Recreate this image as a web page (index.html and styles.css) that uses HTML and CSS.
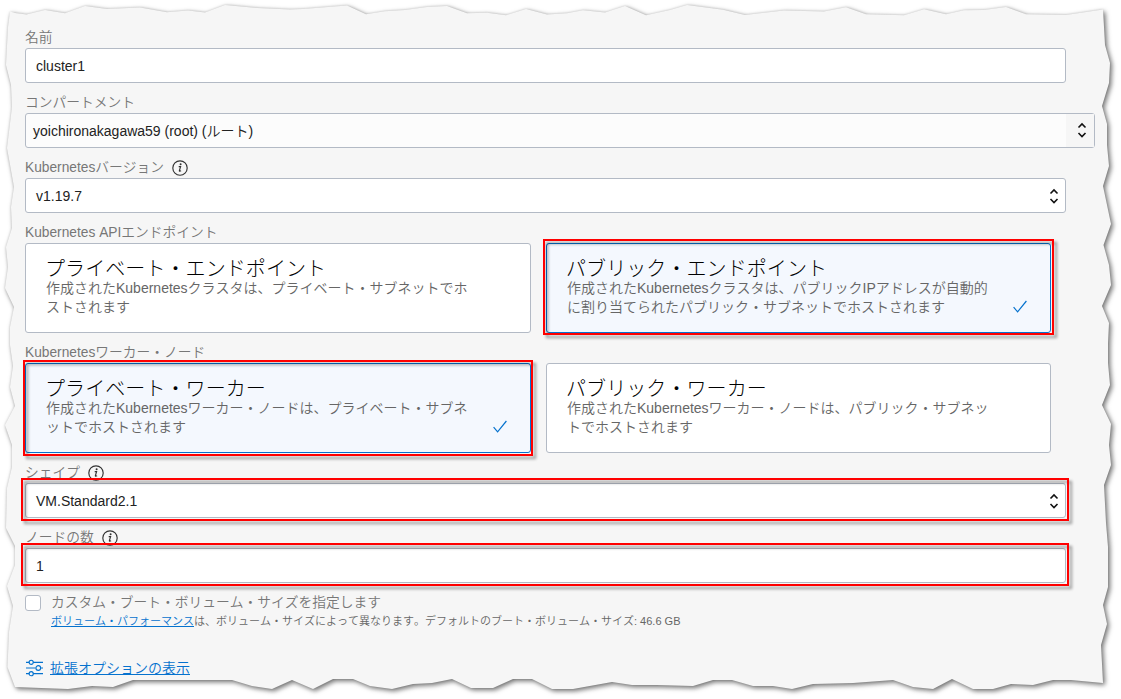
FILE: index.html
```html
<!DOCTYPE html>
<html lang="ja">
<head>
<meta charset="utf-8">
<title>クラスタの作成</title>
<link rel="stylesheet" href="styles.css">
</head>
<body>
<svg class="paper" width="1121" height="699" viewBox="0 0 1121 699" aria-hidden="true">
<path d="M10 11.5L15 13L26.500 14.500L45 10L65 13.300L85 6L107 9L140 7.500L167 12.300L188 10.500L205 12.500L225 5L257 8L290 9.500L303 9L347 5.500L366 14.300L385 11.300L405 10L427 7L447 6L467 13.300L487 12.700L506 15.300L526 9L547 14.500L567 13.300L583 10.300L605 12.500L625 6L646 15.300L670 10L687 5L723 9.700L745 15L784 10.500L824 11.500L846 7.300L866 14.300L904 15.300L924 9.300L946 14.300L964 10.300L984 10L1006 7L1026 14.300L1066 15L1103 9.500L1105 45L1110 63L1109 83L1102 106L1107 124L1107 145L1109 166L1103 186L1111 224L1103.500 245L1109 265L1111 285L1102 306L1109 323L1108 343L1108 363L1110 385L1102 405L1111 424L1109 445L1111 465L1104 485L1106 523L1108 547L1108 587L1103 605L1107 624L1101 645L1103 683L1071 680L1053 680L1033 685L1011 684L993 689L973 689L952 679L933 689L913 687L893 680L853 683L813 684L792 689L773 686L753 686L732 680L713 680L693 686L657 685L632 685L612 682L573 689L552 689L532 679L513 679L493 688L471 688L452 679L432 683L413 684L392 689L370 686L353 679L333 679L313 689L292 680L272 689L252 686L232 680L133 680L113 687L92 686L68 689L15 687L7.500 667L9 632L13 606L7 586L15 565L15 546L6 528L7 488L12 467L12 445L5 425L15 406L10 387L13 366L10 345L10 327L14 307L5 288L8 267L6 247L12 228L11 207L14 187L7 148L12 107L11 85L6 65L8 27Z"/>
</svg>
<main class="form">
  <div class="group">
    <div class="label">名前</div>
    <div class="field">cluster1</div>
  </div>
  <div class="group">
    <div class="label">コンパートメント</div>
    <div class="field compartment"><span class="value">yoichironakagawa59 (root) (ルート)</span><span class="handle"><svg class="chevrons" viewBox="0 0 9 16"><path d="M1 5.500L4.500 2L8 5.500M1 11L4.500 14.500L8 11"/></svg></span></div>
  </div>
  <div class="group">
    <div class="label">Kubernetesバージョン<svg class="info" viewBox="0 0 16 16"><circle cx="8" cy="8" r="7.200"/><path d="M6.700 6.600H8.600L7.400 10.700Q7.300 11.500 9.100 10.700"/><circle class="dot" cx="8.600" cy="4.200" r="1"/></svg></div>
    <div class="field select">v1.19.7<svg class="chevrons" viewBox="0 0 9 16"><path d="M1 5.500L4.500 2L8 5.500M1 11L4.500 14.500L8 11"/></svg></div>
  </div>
  <div class="group">
    <div class="label">Kubernetes APIエンドポイント</div>
    <div class="cards">
      <div class="card"><div class="title">プライベート・エンドポイント</div><div class="text">作成されたKubernetesクラスタは、プライベート・サブネットでホ<br>ストされます</div></div>
      <div class="card selected"><div class="title">パブリック・エンドポイント</div><div class="text">作成されたKubernetesクラスタは、パブリックIPアドレスが自動的<br>に割り当てられたパブリック・サブネットでホストされます</div><svg class="check" viewBox="0 0 14 14"><path d="M0.600 7.200L4.600 11.900L13.400 1"/></svg><i class="frame frame-endpoint"></i></div>
    </div>
  </div>
  <div class="group">
    <div class="label">Kubernetesワーカー・ノード</div>
    <div class="cards">
      <div class="card selected"><div class="title">プライベート・ワーカー</div><div class="text">作成されたKubernetesワーカー・ノードは、プライベート・サブネ<br>ットでホストされます</div><svg class="check" viewBox="0 0 14 14"><path d="M0.600 7.200L4.600 11.900L13.400 1"/></svg><i class="frame frame-worker"></i></div>
      <div class="card"><div class="title">パブリック・ワーカー</div><div class="text">作成されたKubernetesワーカー・ノードは、パブリック・サブネッ<br>トでホストされます</div></div>
    </div>
  </div>
  <div class="group">
    <div class="label">シェイプ<svg class="info" viewBox="0 0 16 16"><circle cx="8" cy="8" r="7.200"/><path d="M6.700 6.600H8.600L7.400 10.700Q7.300 11.500 9.100 10.700"/><circle class="dot" cx="8.600" cy="4.200" r="1"/></svg></div>
    <div class="field select">VM.Standard2.1<svg class="chevrons" viewBox="0 0 9 16"><path d="M1 5.500L4.500 2L8 5.500M1 11L4.500 14.500L8 11"/></svg><i class="frame frame-field"></i></div>
  </div>
  <div class="group">
    <div class="label">ノードの数<svg class="info" viewBox="0 0 16 16"><circle cx="8" cy="8" r="7.200"/><path d="M6.700 6.600H8.600L7.400 10.700Q7.300 11.500 9.100 10.700"/><circle class="dot" cx="8.600" cy="4.200" r="1"/></svg></div>
    <div class="field">1<i class="frame frame-field"></i></div>
  </div>
  <div class="option">
    <span class="checkbox"></span>
    <div class="option-text">
      <div class="option-label">カスタム・ブート・ボリューム・サイズを指定します</div>
      <div class="hint"><a class="link">ボリューム・パフォーマンス</a>は、ボリューム・サイズによって異なります。デフォルトのブート・ボリューム・サイズ: 46.6 GB</div>
    </div>
  </div>
  <div class="advanced">
    <svg class="sliders" viewBox="0 0 18 18"><path d="M0 3H3.500M7.500 3H18M0 9H10M16 9H18M0 15H3.500M7.500 15H18"/><circle cx="5.500" cy="3" r="2.200"/><circle cx="13" cy="9" r="2.500"/><circle cx="5.500" cy="15" r="2.200"/></svg>
    <a class="link">拡張オプションの表示</a>
  </div>
</main>
</body>
</html>
```
FILE: styles.css
```css
* { box-sizing: border-box; }
body {
  margin: 0;
  width: 1121px;
  height: 699px;
  overflow: hidden;
  background: #fff;
  color: #222;
  font: 350 14px/20px "Liberation Sans", "Noto Sans CJK JP", sans-serif;
  font-kerning: none;
  white-space: nowrap;
}
.paper { position: absolute; left: 0; top: 0; fill: #f6f6f6; filter: drop-shadow(2px 2.500px 2.500px rgba(0,0,0,.52)) drop-shadow(0 0 1px rgba(0,0,0,.15)); }
.form { position: relative; padding: 18px 0 0 25px; }
.label { display: flex; align-items: center; height: 30px; padding-top: 10px; font-size: 13.750px; color: #777; }
.info { width: 16px; height: 16px; margin-left: 8px; fill: none; stroke: #333; stroke-width: 1.150; }
.info .dot { fill: #333; stroke: none; }
.field {
  position: relative;
  display: flex;
  align-items: center;
  width: 1041px;
  height: 35px;
  padding: 0 6px 0 10px;
  border: 1px solid #b3bac5;
  border-radius: 3px;
  background: #fff;
}
.select { justify-content: space-between; }
.compartment { width: 1070px; padding: 0; background: #fcfcfc; justify-content: space-between; }
.value { padding-left: 7px; }
.handle { display: flex; justify-content: flex-end; align-items: center; width: 28px; height: 33px; padding-right: 7px; background: #f6f6f6; }
.chevrons { width: 10px; height: 16px; fill: none; stroke: #111; stroke-width: 1.600; }
.compartment .chevrons { margin-top: -2px; }
.select .chevrons { margin-top: 1px; }
.cards { display: grid; grid-template-columns: 506px 505px; gap: 15px; }
.card { position: relative; height: 90px; padding: 11px 20px 0 19px; border: 1px solid #b3bac5; border-radius: 3px; background: #fff; }
.selected { background: #f4f8fe; border-color: #0572ce; }
.title { height: 24px; font-size: 20px; font-weight: 300; line-height: 29px; letter-spacing: .08px; color: #000; }
.text { padding-left: 1px; font-size: 14px; line-height: 19px; color: #666; }
.check { position: absolute; right: 23px; bottom: 18px; width: 14px; height: 14px; fill: none; stroke: #0572ce; stroke-width: 1.200; }
.frame { position: absolute; z-index: 1; border: 2px solid #f00; filter: drop-shadow(3px 3px 1.500px rgba(0,0,0,.4)); }
.frame-endpoint { inset: -5px -4px -3px -4px; }
.frame-worker { inset: -4px -3px -4px -3px; }
.frame-field { inset: -6px -4px -4px -5px; }
.option { display: flex; gap: 10px; padding-top: 9px; color: #777; }
.checkbox { width: 16px; height: 16px; margin-top: 3px; border: 1px solid #b3bac5; border-radius: 3px; background: #fff; }
.option-label { height: 20px; font-size: 13.750px; line-height: 22px; }
.hint { font-size: 11px; line-height: 18px; color: #666; }
.link { color: #0572ce; text-decoration: underline; }
.advanced { display: flex; align-items: center; gap: 7px; padding-top: 28px; padding-left: 1px; }
.sliders { width: 17px; height: 18px; fill: none; stroke: #0572ce; stroke-width: 1.200; }
```
